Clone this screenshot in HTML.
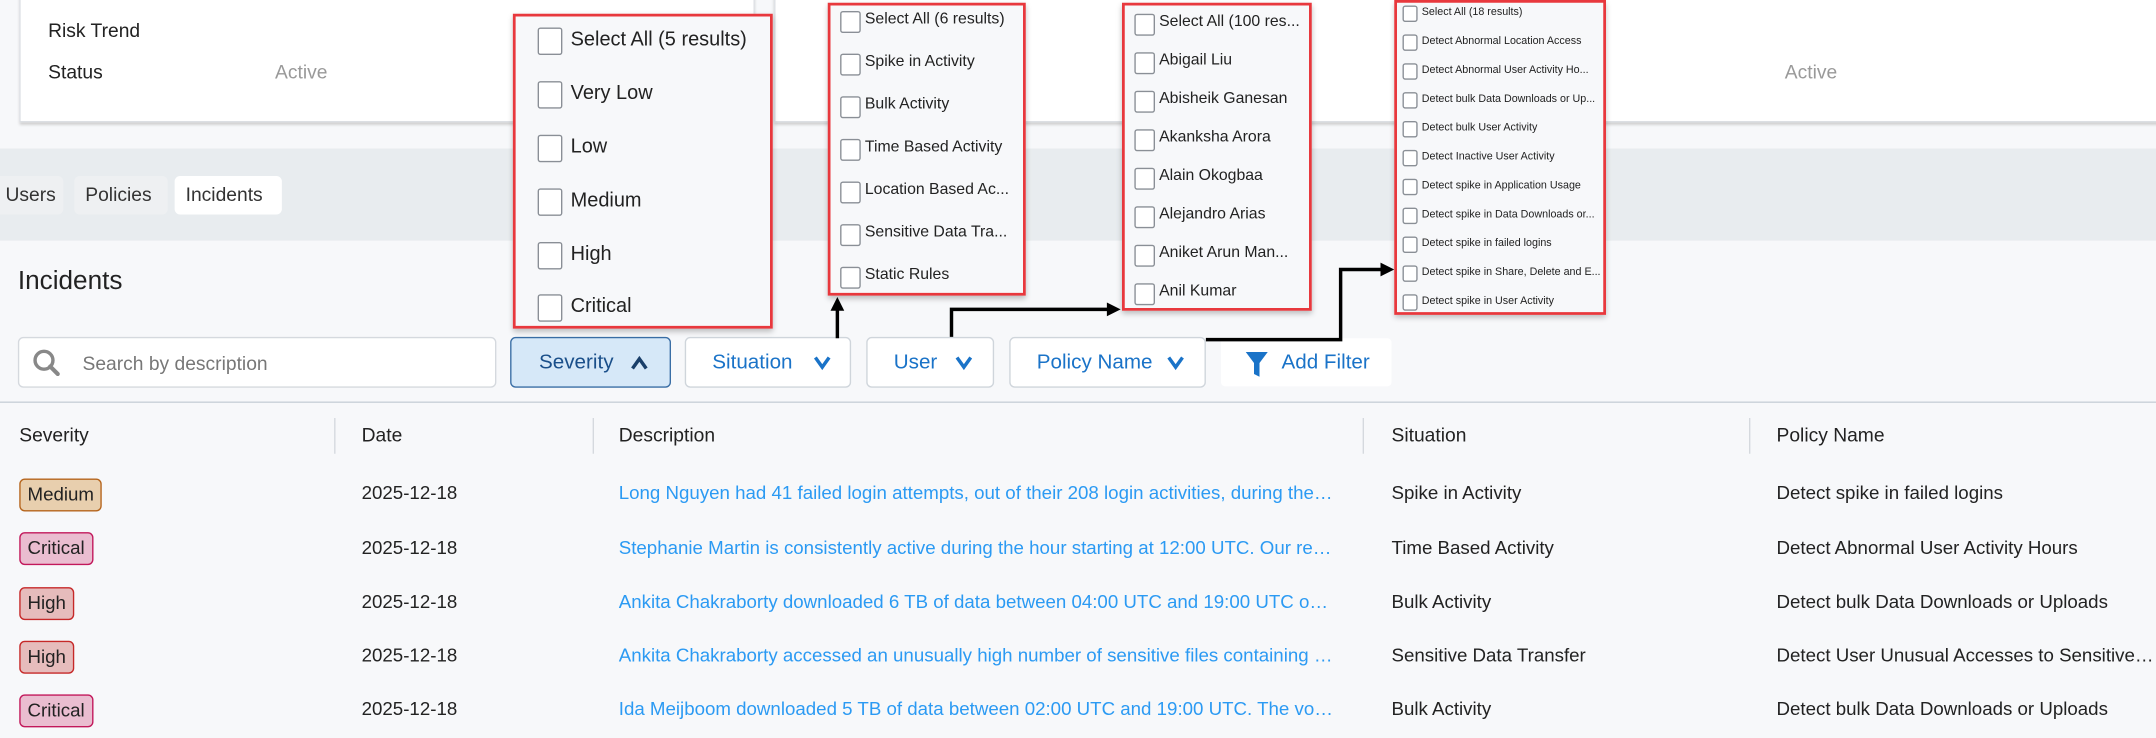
<!DOCTYPE html>
<html><head><meta charset="utf-8"><style>
html,body{margin:0;padding:0;width:2156px;height:738px;overflow:hidden;background:#f7f8fa;font-family:"Liberation Sans",sans-serif;color:#222}
#w{position:absolute;left:0;top:0;width:1568px;height:537px;transform:scale(1.375);transform-origin:0 0;background:#f7f8fa}
.a{position:absolute;white-space:nowrap}
.card{position:absolute;background:#fff;border:1px solid #dcdfe3;box-shadow:0 2px 2px #ccc}
.tab{position:absolute;top:128px;height:28px;line-height:27px;font-size:14px;background:#eef0f2;border-radius:4px;padding:0 8px;color:#333}
.btn{position:absolute;top:245px;height:37px;border:1px solid #cfd5db;border-radius:4px;background:#fff;color:#1a73c8;font-size:15px;line-height:36px;box-sizing:border-box}
.btn svg{position:absolute;top:12px}
.dd{position:absolute;background:#f7f8fa;border:2px solid #e8383d;box-shadow:0 2px 4px rgba(0,0,0,.25);box-sizing:border-box}
.cb{position:absolute;border:1px solid #8a8f96;border-radius:2px;background:#fff}
.hd{position:absolute;top:308px;font-size:14px;color:#222}
.dv{position:absolute;top:304px;width:1px;height:26px;background:#d5d9de}
.cell{position:absolute;font-size:13.6px;color:#222;white-space:nowrap}
.lnk{color:#2b9af3;overflow:hidden;text-overflow:ellipsis;width:520px}
.bd{position:absolute;left:14px;height:22px;line-height:22px;font-size:13.6px;padding:0 5px;border-radius:4px;border:1px solid}
</style></head><body><div id="w">
<div class="card" style="left:14px;top:-5px;width:533px;height:92px"></div>
<div class="card" style="left:563px;top:-5px;width:1020px;height:92px"></div>
<div class="a" style="left:35px;top:14px;font-size:14px">Risk Trend</div>
<div class="a" style="left:35px;top:44px;font-size:14px">Status</div>
<div class="a" style="left:200px;top:44px;font-size:14px;color:#999">Active</div>
<div class="a" style="left:1298px;top:44px;font-size:14px;color:#999">Active</div>
<div class="a" style="left:0;top:108px;width:1568px;height:67px;background:#e8ecef"></div>
<div class="tab" style="left:-4px;width:34px">Users</div>
<div class="tab" style="left:54px;width:52px">Policies</div>
<div class="tab" style="left:127px;width:62px;background:#fff">Incidents</div>
<div class="a" style="left:13px;top:194px;font-size:19px">Incidents</div>

<div class="btn" style="left:13px;width:348px;color:#777;border-color:#d5d9de">
<svg width="22" height="22" viewBox="0 0 22 22" style="left:9px;top:7px"><circle cx="9" cy="9" r="6.5" fill="none" stroke="#888" stroke-width="2.5"/><path d="M13.5 13.5L19 19" stroke="#888" stroke-width="3" stroke-linecap="round"/></svg>
<span style="position:absolute;left:46px;font-size:14px">Search by description</span></div>
<div class="btn" style="left:371px;width:117px;background:#d6e8f8;border-color:#3a6ea5;color:#1a4f8a"><span style="position:absolute;left:20px">Severity</span>
<svg width="14" height="12" viewBox="0 0 14 12" style="left:86px"><path d="M2 10L7 3L12 10" fill="none" stroke="#1a3f6a" stroke-width="2.5"/></svg></div>
<div class="btn" style="left:498px;width:121px"><span style="position:absolute;left:19px">Situation</span>
<svg width="14" height="12" viewBox="0 0 14 12" style="left:92px"><path d="M2 2L7 9L12 2" fill="none" stroke="#1a73c8" stroke-width="2.5"/></svg></div>
<div class="btn" style="left:630px;width:93px"><span style="position:absolute;left:19px">User</span>
<svg width="14" height="12" viewBox="0 0 14 12" style="left:63px"><path d="M2 2L7 9L12 2" fill="none" stroke="#1a73c8" stroke-width="2.5"/></svg></div>
<div class="btn" style="left:734px;width:143px"><span style="position:absolute;left:19px">Policy Name</span>
<svg width="14" height="12" viewBox="0 0 14 12" style="left:113px"><path d="M2 2L7 9L12 2" fill="none" stroke="#1a73c8" stroke-width="2.5"/></svg></div>
<div class="btn" style="left:887px;width:126px;border-color:#f7f8fa"><svg width="18" height="20" viewBox="0 0 18 20" style="left:17px;top:9px"><path d="M1 1H17L11 9V19L7 17V9Z" fill="#1a73c8"/></svg><span style="position:absolute;left:44px">Add Filter</span></div>

<div class="a" style="left:0;top:292px;width:1568px;height:1px;background:#c9d0d8"></div>
<div class="hd" style="left:14px">Severity</div><div class="dv" style="left:243px"></div>
<div class="hd" style="left:263px">Date</div><div class="dv" style="left:431px"></div>
<div class="hd" style="left:450px">Description</div><div class="dv" style="left:991px"></div>
<div class="hd" style="left:1012px">Situation</div><div class="dv" style="left:1272px"></div>
<div class="hd" style="left:1292px">Policy Name</div>

<div class="bd" style="top:348px;background:#e8cfae;border-color:#b5651d">Medium</div>
<div class="bd" style="top:387px;background:#eabdd0;border-color:#c2185b">Critical</div>
<div class="bd" style="top:427px;background:#e6bcbc;border-color:#c62828">High</div>
<div class="bd" style="top:466px;background:#e6bcbc;border-color:#c62828">High</div>
<div class="bd" style="top:505px;background:#eabdd0;border-color:#c2185b">Critical</div>

<div class="cell" style="left:263px;top:351px">2025-12-18</div>
<div class="cell" style="left:263px;top:391px">2025-12-18</div>
<div class="cell" style="left:263px;top:430px">2025-12-18</div>
<div class="cell" style="left:263px;top:469px">2025-12-18</div>
<div class="cell" style="left:263px;top:508px">2025-12-18</div>
<div class="cell lnk" style="left:450px;top:351px">Long Nguyen had 41 failed login attempts, out of their 208 login activities, during the hour</div>
<div class="cell lnk" style="left:450px;top:391px">Stephanie Martin is consistently active during the hour starting at 12:00 UTC. Our records</div>
<div class="cell lnk" style="left:450px;top:430px">Ankita Chakraborty downloaded 6 TB of data between 04:00 UTC and 19:00 UTC on the day</div>
<div class="cell lnk" style="left:450px;top:469px">Ankita Chakraborty accessed an unusually high number of sensitive files containing data</div>
<div class="cell lnk" style="left:450px;top:508px">Ida Meijboom downloaded 5 TB of data between 02:00 UTC and 19:00 UTC. The volume</div>
<div class="cell" style="left:1012px;top:351px">Spike in Activity</div>
<div class="cell" style="left:1012px;top:391px">Time Based Activity</div>
<div class="cell" style="left:1012px;top:430px">Bulk Activity</div>
<div class="cell" style="left:1012px;top:469px">Sensitive Data Transfer</div>
<div class="cell" style="left:1012px;top:508px">Bulk Activity</div>
<div class="cell" style="left:1292px;top:351px">Detect spike in failed logins</div>
<div class="cell" style="left:1292px;top:391px">Detect Abnormal User Activity Hours</div>
<div class="cell" style="left:1292px;top:430px">Detect bulk Data Downloads or Uploads</div>
<div class="cell" style="left:1292px;top:469px;width:276px;overflow:hidden;text-overflow:ellipsis">Detect User Unusual Accesses to Sensitive Files</div>
<div class="cell" style="left:1292px;top:508px">Detect bulk Data Downloads or Uploads</div>

<svg class="a" style="left:0;top:0" width="1568" height="300" viewBox="0 0 1568 300">
<path d="M609 246V224" stroke="#000" stroke-width="2.5" fill="none"/><path d="M604 226L609 216L614 226Z" fill="#000"/>
<path d="M692 245V225H806" stroke="#000" stroke-width="2.5" fill="none"/><path d="M805 220L815 225L805 230Z" fill="#000"/>
<path d="M877 247H975V196H1005" stroke="#000" stroke-width="2.5" fill="none"/><path d="M1004 191L1014 196L1004 201Z" fill="#000"/>
</svg>

<div class="dd" style="left:373px;top:10px;width:189px;height:229px;font-size:14.5px">
<div class="cb" style="left:16px;top:8px;width:16px;height:18px"></div><div class="a" style="left:40px;top:9px">Select All (5 results)</div>
<div class="cb" style="left:16px;top:47px;width:16px;height:18px"></div><div class="a" style="left:40px;top:48px">Very Low</div>
<div class="cb" style="left:16px;top:86px;width:16px;height:18px"></div><div class="a" style="left:40px;top:87px">Low</div>
<div class="cb" style="left:16px;top:125px;width:16px;height:18px"></div><div class="a" style="left:40px;top:126px">Medium</div>
<div class="cb" style="left:16px;top:164px;width:16px;height:18px"></div><div class="a" style="left:40px;top:165px">High</div>
<div class="cb" style="left:16px;top:202px;width:16px;height:18px"></div><div class="a" style="left:40px;top:203px">Critical</div>
</div>
<div class="dd" style="left:602px;top:2px;width:144px;height:213px;font-size:11.5px">
<div class="cb" style="left:7px;top:4px;width:13px;height:14px"></div><div class="a" style="left:25px;top:4px">Select All (6 results)</div>
<div class="cb" style="left:7px;top:35px;width:13px;height:14px"></div><div class="a" style="left:25px;top:35px">Spike in Activity</div>
<div class="cb" style="left:7px;top:66px;width:13px;height:14px"></div><div class="a" style="left:25px;top:66px">Bulk Activity</div>
<div class="cb" style="left:7px;top:97px;width:13px;height:14px"></div><div class="a" style="left:25px;top:97px">Time Based Activity</div>
<div class="cb" style="left:7px;top:128px;width:13px;height:14px"></div><div class="a" style="left:25px;top:128px">Location Based Ac...</div>
<div class="cb" style="left:7px;top:159px;width:13px;height:14px"></div><div class="a" style="left:25px;top:159px">Sensitive Data Tra...</div>
<div class="cb" style="left:7px;top:190px;width:13px;height:14px"></div><div class="a" style="left:25px;top:190px">Static Rules</div>
</div>
<div class="dd" style="left:816px;top:2px;width:138px;height:224px;font-size:11.5px">
<div class="cb" style="left:7px;top:6px;width:13px;height:14px"></div><div class="a" style="left:25px;top:6px">Select All (100 res...</div>
<div class="cb" style="left:7px;top:34px;width:13px;height:14px"></div><div class="a" style="left:25px;top:34px">Abigail Liu</div>
<div class="cb" style="left:7px;top:62px;width:13px;height:14px"></div><div class="a" style="left:25px;top:62px">Abisheik Ganesan</div>
<div class="cb" style="left:7px;top:90px;width:13px;height:14px"></div><div class="a" style="left:25px;top:90px">Akanksha Arora</div>
<div class="cb" style="left:7px;top:118px;width:13px;height:14px"></div><div class="a" style="left:25px;top:118px">Alain Okogbaa</div>
<div class="cb" style="left:7px;top:146px;width:13px;height:14px"></div><div class="a" style="left:25px;top:146px">Alejandro Arias</div>
<div class="cb" style="left:7px;top:174px;width:13px;height:14px"></div><div class="a" style="left:25px;top:174px">Aniket Arun Man...</div>
<div class="cb" style="left:7px;top:202px;width:13px;height:14px"></div><div class="a" style="left:25px;top:202px">Anil Kumar</div>
</div>
<div class="dd" style="left:1014px;top:0;width:154px;height:229px;font-size:7.8px">
<div class="cb" style="left:4px;top:2px;width:9px;height:10px"></div><div class="a" style="left:18px;top:2px">Select All (18 results)</div>
<div class="cb" style="left:4px;top:23px;width:9px;height:10px"></div><div class="a" style="left:18px;top:23px">Detect Abnormal Location Access</div>
<div class="cb" style="left:4px;top:44px;width:9px;height:10px"></div><div class="a" style="left:18px;top:44px">Detect Abnormal User Activity Ho...</div>
<div class="cb" style="left:4px;top:65px;width:9px;height:10px"></div><div class="a" style="left:18px;top:65px">Detect bulk Data Downloads or Up...</div>
<div class="cb" style="left:4px;top:86px;width:9px;height:10px"></div><div class="a" style="left:18px;top:86px">Detect bulk User Activity</div>
<div class="cb" style="left:4px;top:107px;width:9px;height:10px"></div><div class="a" style="left:18px;top:107px">Detect Inactive User Activity</div>
<div class="cb" style="left:4px;top:128px;width:9px;height:10px"></div><div class="a" style="left:18px;top:128px">Detect spike in Application Usage</div>
<div class="cb" style="left:4px;top:149px;width:9px;height:10px"></div><div class="a" style="left:18px;top:149px">Detect spike in Data Downloads or...</div>
<div class="cb" style="left:4px;top:170px;width:9px;height:10px"></div><div class="a" style="left:18px;top:170px">Detect spike in failed logins</div>
<div class="cb" style="left:4px;top:191px;width:9px;height:10px"></div><div class="a" style="left:18px;top:191px">Detect spike in Share, Delete and E...</div>
<div class="cb" style="left:4px;top:212px;width:9px;height:10px"></div><div class="a" style="left:18px;top:212px">Detect spike in User Activity</div>
</div>
</div></body></html>
